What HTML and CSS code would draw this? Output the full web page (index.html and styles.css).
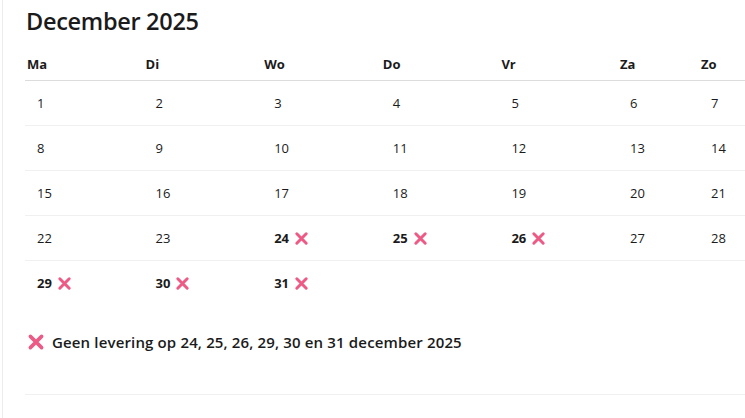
FILE: index.html
```html
<!DOCTYPE html>
<html lang="nl">
<head>
<meta charset="utf-8">
<link rel="stylesheet" href="styles.css">
</head>
<body>
<div class="panel">
  <h1 class="title">December 2025</h1>
  <div class="cal">
    <div class="hd">Ma</div><div class="hd">Di</div><div class="hd">Wo</div><div class="hd">Do</div><div class="hd">Vr</div><div class="hd">Za</div><div class="hd">Zo</div>

    <div class="day">1</div><div class="day">2</div><div class="day">3</div><div class="day">4</div><div class="day">5</div><div class="day">6</div><div class="day">7</div>
    <div class="day">8</div><div class="day">9</div><div class="day">10</div><div class="day">11</div><div class="day">12</div><div class="day">13</div><div class="day">14</div>
    <div class="day">15</div><div class="day">16</div><div class="day">17</div><div class="day">18</div><div class="day">19</div><div class="day">20</div><div class="day">21</div>
    <div class="day">22</div><div class="day">23</div>
    <div class="day off">24 <svg class="x" viewBox="0 0 16 16"><path d="M3 3L13 13M13 3L3 13"/></svg></div>
    <div class="day off">25 <svg class="x" viewBox="0 0 16 16"><path d="M3 3L13 13M13 3L3 13"/></svg></div>
    <div class="day off">26 <svg class="x" viewBox="0 0 16 16"><path d="M3 3L13 13M13 3L3 13"/></svg></div>
    <div class="day">27</div><div class="day">28</div>
    <div class="day off last">29 <svg class="x" viewBox="0 0 16 16"><path d="M3 3L13 13M13 3L3 13"/></svg></div>
    <div class="day off last">30 <svg class="x" viewBox="0 0 16 16"><path d="M3 3L13 13M13 3L3 13"/></svg></div>
    <div class="day off last">31 <svg class="x" viewBox="0 0 16 16"><path d="M3 3L13 13M13 3L3 13"/></svg></div>
    <div class="day last"></div><div class="day last"></div><div class="day last"></div><div class="day last"></div>
  </div>
  <p class="legend"><svg class="x big" viewBox="0 0 16 16"><path d="M3 3L13 13M13 3L3 13"/></svg>Geen levering op 24, 25, 26, 29, 30 en 31 december 2025</p>
  <div class="rule"></div>
</div>
</body>
</html>
```
FILE: styles.css
```css
html, body {
  margin: 0;
  padding: 0;
  background: #fff;
}
body {
  font-family: "Open Sans", "Noto Sans", sans-serif;
  color: #1b1b1b;
}
.panel {
  margin-left: 2px;
  border-left: 1px solid #ececec;
  padding-left: 22px;
  height: 418px;
  box-sizing: border-box;
}
.title {
  margin: 0;
  padding: 6px 0 0 1px;
  font-size: 23.5px;
  line-height: 30px;
  font-weight: 600;
  letter-spacing: -0.3px;
}
.cal {
  margin-top: 12px;
  display: grid;
  grid-template-columns: repeat(5, 118.6px) 81px 1fr;
}
.hd {
  font-size: 13px;
  font-weight: 700;
  line-height: 16px;
  padding: 8px 0 8px 2px;
  border-bottom: 1px solid #dcdcdc;
}
.day {
  font-size: 13px;
  line-height: 16px;
  padding: 14px 0 14px 12px;
  border-bottom: 1px solid #f0f0f0;
  display: flex;
  align-items: center;
  gap: 5px;
}
.day.last {
  border-bottom: none;
}
.day.off {
  font-weight: 700;
}
.x {
  width: 15px;
  height: 15px;
  flex: none;
}
.x path {
  stroke: #ec5a85;
  stroke-width: 3.2;
  stroke-linecap: round;
  fill: none;
}
.legend {
  margin: 25px 0 0;
  display: flex;
  align-items: center;
  gap: 7px;
  font-size: 15px;
  line-height: 24px;
  font-weight: 600;
  letter-spacing: 0.15px;
}
.legend .big {
  width: 18px;
  height: 18px;
  margin-left: 2px;
}
.rule {
  margin-top: 40px;
  border-top: 1px solid #f0f0f0;
}
```
